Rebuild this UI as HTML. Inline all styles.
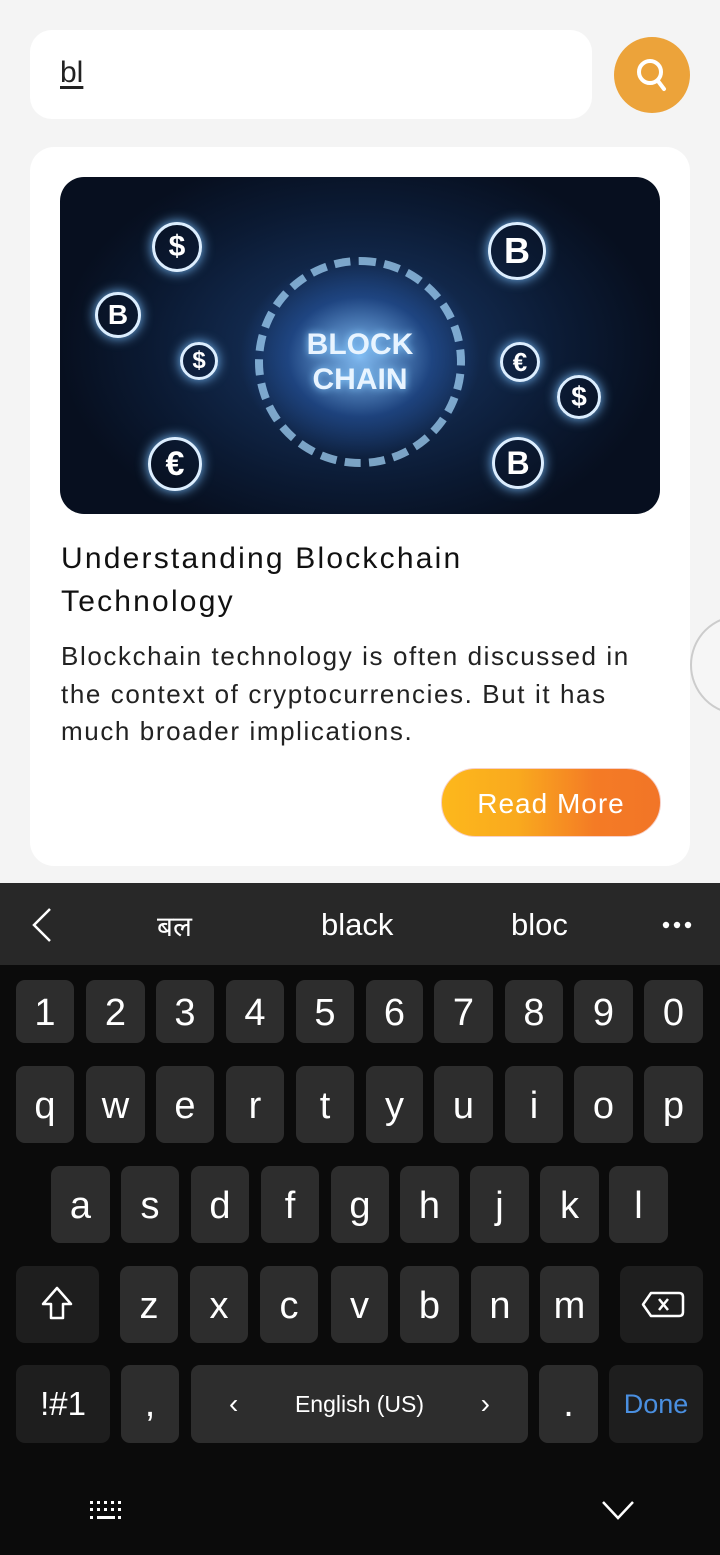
<!DOCTYPE html>
<html><head><meta charset="utf-8"><style>
*{margin:0;padding:0;box-sizing:border-box}
body{width:720px;height:1555px;background:#f4f4f4;position:relative;overflow:hidden;font-family:"Liberation Sans",sans-serif}
.abs{position:absolute}
.search{left:30px;top:30px;width:562px;height:89px;background:#fff;border-radius:22px}
.search span{position:absolute;left:30px;top:26px;font-size:30px;color:#222;text-decoration:underline;text-underline-offset:4px}
.sbtn{left:614px;top:37px;width:76px;height:76px;border-radius:50%;background:#eca33a}
.card{left:30px;top:147px;width:660px;height:719px;background:#fff;border-radius:24px}
.img{left:60px;top:177px;width:600px;height:337px;border-radius:24px;overflow:hidden;
background:radial-gradient(ellipse 120px 100px at 300px 180px,rgba(140,200,255,.9),rgba(40,90,170,.5) 60%,transparent 100%),radial-gradient(ellipse 300px 200px at 300px 170px,#1a3a6a,#0b1a33 70%,#070f1f)}
.title{left:61px;top:537px;font-size:30px;line-height:43px;color:#111;letter-spacing:2.2px}
.body{left:61px;top:638px;font-size:26px;line-height:37.5px;color:#222;letter-spacing:1.6px;width:600px}
.rm{left:441px;top:768px;width:220px;height:69px;border-radius:35px;background:linear-gradient(90deg,#fdb81c 0%,#f9a91e 35%,#f47b25 70%,#f27527);color:#fff;font-size:28px;letter-spacing:1px;text-align:center;line-height:69px;border:1px solid #f6d0c8}
.kb{left:0;top:883px;width:720px;height:672px;background:#0b0b0b}
.sug{left:0;top:883px;width:720px;height:82px;background:#282828;color:#fff;font-size:31px}
.k{position:absolute;background:#2d2d2d;border-radius:9px;color:#fff;font-size:38px;text-align:center}
.k.s{background:#1e1e1e}
.coin{position:absolute;border-radius:50%;border:3px solid #dceeff;color:#fff;font-weight:bold;text-align:center;box-shadow:0 0 12px #7bc0ff}
</style></head><body>
<div class="abs search"><span>bl</span></div>
<div class="abs sbtn"><svg width="76" height="76"><circle cx="36" cy="35" r="11" fill="none" stroke="#fff" stroke-width="4"/><line x1="44" y1="44" x2="50" y2="52" stroke="#fff" stroke-width="4" stroke-linecap="round"/></svg></div>
<div class="abs" style="left:690px;top:615px;width:100px;height:100px;border-radius:50%;border:2px solid #ccc;background:#f6f6f6"></div>
<div class="abs card"></div>
<div class="abs img">
<div class="abs" style="left:195px;top:80px;width:210px;height:210px;border-radius:50%;border:8px dashed rgba(170,220,255,.7)"></div>
<div class="abs" style="left:225px;top:150px;width:150px;text-align:center;color:#e8f4ff;font-weight:bold;font-size:30px;line-height:35px;text-shadow:0 0 8px #8cf">BLOCK<br>CHAIN</div>
<div class="coin" style="left:35px;top:115px;width:46px;height:46px;font-size:28px;line-height:40px">B</div>
<div class="coin" style="left:92px;top:45px;width:50px;height:50px;font-size:30px;line-height:44px">$</div>
<div class="coin" style="left:120px;top:165px;width:38px;height:38px;font-size:24px;line-height:32px">$</div>
<div class="coin" style="left:88px;top:260px;width:54px;height:54px;font-size:34px;line-height:48px">€</div>
<div class="coin" style="left:428px;top:45px;width:58px;height:58px;font-size:36px;line-height:52px">B</div>
<div class="coin" style="left:440px;top:165px;width:40px;height:40px;font-size:26px;line-height:34px">€</div>
<div class="coin" style="left:497px;top:198px;width:44px;height:44px;font-size:28px;line-height:38px">$</div>
<div class="coin" style="left:432px;top:260px;width:52px;height:52px;font-size:32px;line-height:46px">B</div>
</div>
<div class="abs title">Understanding Blockchain<br>Technology</div>
<div class="abs body">Blockchain technology is often discussed in the context of cryptocurrencies. But it has much broader implications.</div>
<div class="abs rm">Read More</div>

<div class="abs kb"></div>
<div class="abs sug">
<svg class="abs" style="left:30px;top:24px" width="24" height="36"><polyline points="20,2 4,18 20,34" fill="none" stroke="#fff" stroke-width="2.5"/></svg>
<span class="abs" style="left:157px;top:24px;font-family:'Liberation Sans','Noto Sans CJK SC',sans-serif;font-size:28px">बल</span>
<span class="abs" style="left:321px;top:24px">black</span>
<span class="abs" style="left:511px;top:24px">bloc</span>
<svg class="abs" style="left:662px;top:38px" width="32" height="8"><circle cx="4" cy="4" r="3.2" fill="#fff"/><circle cx="15" cy="4" r="3.2" fill="#fff"/><circle cx="26" cy="4" r="3.2" fill="#fff"/></svg>
</div>

<div class="k" style="left:16px;top:980px;width:58px;height:63px;line-height:66px">1</div>
<div class="k" style="left:86px;top:980px;width:59px;height:63px;line-height:66px">2</div>
<div class="k" style="left:156px;top:980px;width:58px;height:63px;line-height:66px">3</div>
<div class="k" style="left:226px;top:980px;width:58px;height:63px;line-height:66px">4</div>
<div class="k" style="left:296px;top:980px;width:58px;height:63px;line-height:66px">5</div>
<div class="k" style="left:366px;top:980px;width:57px;height:63px;line-height:66px">6</div>
<div class="k" style="left:434px;top:980px;width:59px;height:63px;line-height:66px">7</div>
<div class="k" style="left:505px;top:980px;width:58px;height:63px;line-height:66px">8</div>
<div class="k" style="left:574px;top:980px;width:59px;height:63px;line-height:66px">9</div>
<div class="k" style="left:644px;top:980px;width:59px;height:63px;line-height:66px">0</div>

<div class="k" style="left:16px;top:1066px;width:58px;height:77px;line-height:80px">q</div>
<div class="k" style="left:86px;top:1066px;width:59px;height:77px;line-height:80px">w</div>
<div class="k" style="left:156px;top:1066px;width:58px;height:77px;line-height:80px">e</div>
<div class="k" style="left:226px;top:1066px;width:58px;height:77px;line-height:80px">r</div>
<div class="k" style="left:296px;top:1066px;width:58px;height:77px;line-height:80px">t</div>
<div class="k" style="left:366px;top:1066px;width:57px;height:77px;line-height:80px">y</div>
<div class="k" style="left:434px;top:1066px;width:59px;height:77px;line-height:80px">u</div>
<div class="k" style="left:505px;top:1066px;width:58px;height:77px;line-height:80px">i</div>
<div class="k" style="left:574px;top:1066px;width:59px;height:77px;line-height:80px">o</div>
<div class="k" style="left:644px;top:1066px;width:59px;height:77px;line-height:80px">p</div>

<div class="k" style="left:51px;top:1166px;width:59px;height:77px;line-height:80px">a</div>
<div class="k" style="left:121px;top:1166px;width:58px;height:77px;line-height:80px">s</div>
<div class="k" style="left:191px;top:1166px;width:58px;height:77px;line-height:80px">d</div>
<div class="k" style="left:261px;top:1166px;width:58px;height:77px;line-height:80px">f</div>
<div class="k" style="left:331px;top:1166px;width:58px;height:77px;line-height:80px">g</div>
<div class="k" style="left:400px;top:1166px;width:59px;height:77px;line-height:80px">h</div>
<div class="k" style="left:470px;top:1166px;width:59px;height:77px;line-height:80px">j</div>
<div class="k" style="left:540px;top:1166px;width:59px;height:77px;line-height:80px">k</div>
<div class="k" style="left:609px;top:1166px;width:59px;height:77px;line-height:80px">l</div>

<div class="k s" style="left:16px;top:1266px;width:83px;height:77px"><svg width="83" height="77"><path d="M41 22 L27 38 H35 V52 H47 V38 H55 Z" fill="none" stroke="#fff" stroke-width="2.5" stroke-linejoin="round"/></svg></div>
<div class="k" style="left:120px;top:1266px;width:58px;height:77px;line-height:80px">z</div>
<div class="k" style="left:190px;top:1266px;width:58px;height:77px;line-height:80px">x</div>
<div class="k" style="left:260px;top:1266px;width:58px;height:77px;line-height:80px">c</div>
<div class="k" style="left:331px;top:1266px;width:57px;height:77px;line-height:80px">v</div>
<div class="k" style="left:400px;top:1266px;width:59px;height:77px;line-height:80px">b</div>
<div class="k" style="left:471px;top:1266px;width:58px;height:77px;line-height:80px">n</div>
<div class="k" style="left:540px;top:1266px;width:59px;height:77px;line-height:80px">m</div>
<div class="k s" style="left:620px;top:1266px;width:83px;height:77px"><svg width="83" height="77"><path d="M31 27 H59 Q63 27 63 31 V46 Q63 50 59 50 H31 L23 38.5 Z" fill="none" stroke="#fff" stroke-width="2.5" stroke-linejoin="round"/><path d="M39 33 L48 44 M48 33 L39 44" stroke="#fff" stroke-width="2.5"/></svg></div>

<div class="k s" style="left:16px;top:1365px;width:94px;height:78px;line-height:78px;font-size:33px">!#1</div>
<div class="k" style="left:121px;top:1365px;width:58px;height:78px;line-height:78px">,</div>
<div class="k" style="left:191px;top:1365px;width:337px;height:78px;line-height:78px;font-size:23px"><span class="abs" style="left:38px;font-size:28px">‹</span>English (US)<span class="abs" style="right:38px;font-size:28px">›</span></div>
<div class="k" style="left:539px;top:1365px;width:59px;height:78px;line-height:78px">.</div>
<div class="k s" style="left:609px;top:1365px;width:94px;height:78px;line-height:78px;font-size:27px;color:#4a8fe0">Done</div>

<svg class="abs" style="left:89px;top:1500px" width="36" height="22"><g fill="#fff"><rect x="1" y="1" width="3" height="3"/><rect x="8" y="1" width="3" height="3"/><rect x="15" y="1" width="3" height="3"/><rect x="22" y="1" width="3" height="3"/><rect x="29" y="1" width="3" height="3"/><rect x="1" y="8" width="3" height="3"/><rect x="8" y="8" width="3" height="3"/><rect x="15" y="8" width="3" height="3"/><rect x="22" y="8" width="3" height="3"/><rect x="29" y="8" width="3" height="3"/><rect x="1" y="16" width="3" height="3"/><rect x="8" y="16" width="18" height="3"/><rect x="29" y="16" width="3" height="3"/></g></svg>
<svg class="abs" style="left:601px;top:1500px" width="34" height="22"><polyline points="2,2 17,18 32,2" fill="none" stroke="#fff" stroke-width="2.5"/></svg>
</body></html>
